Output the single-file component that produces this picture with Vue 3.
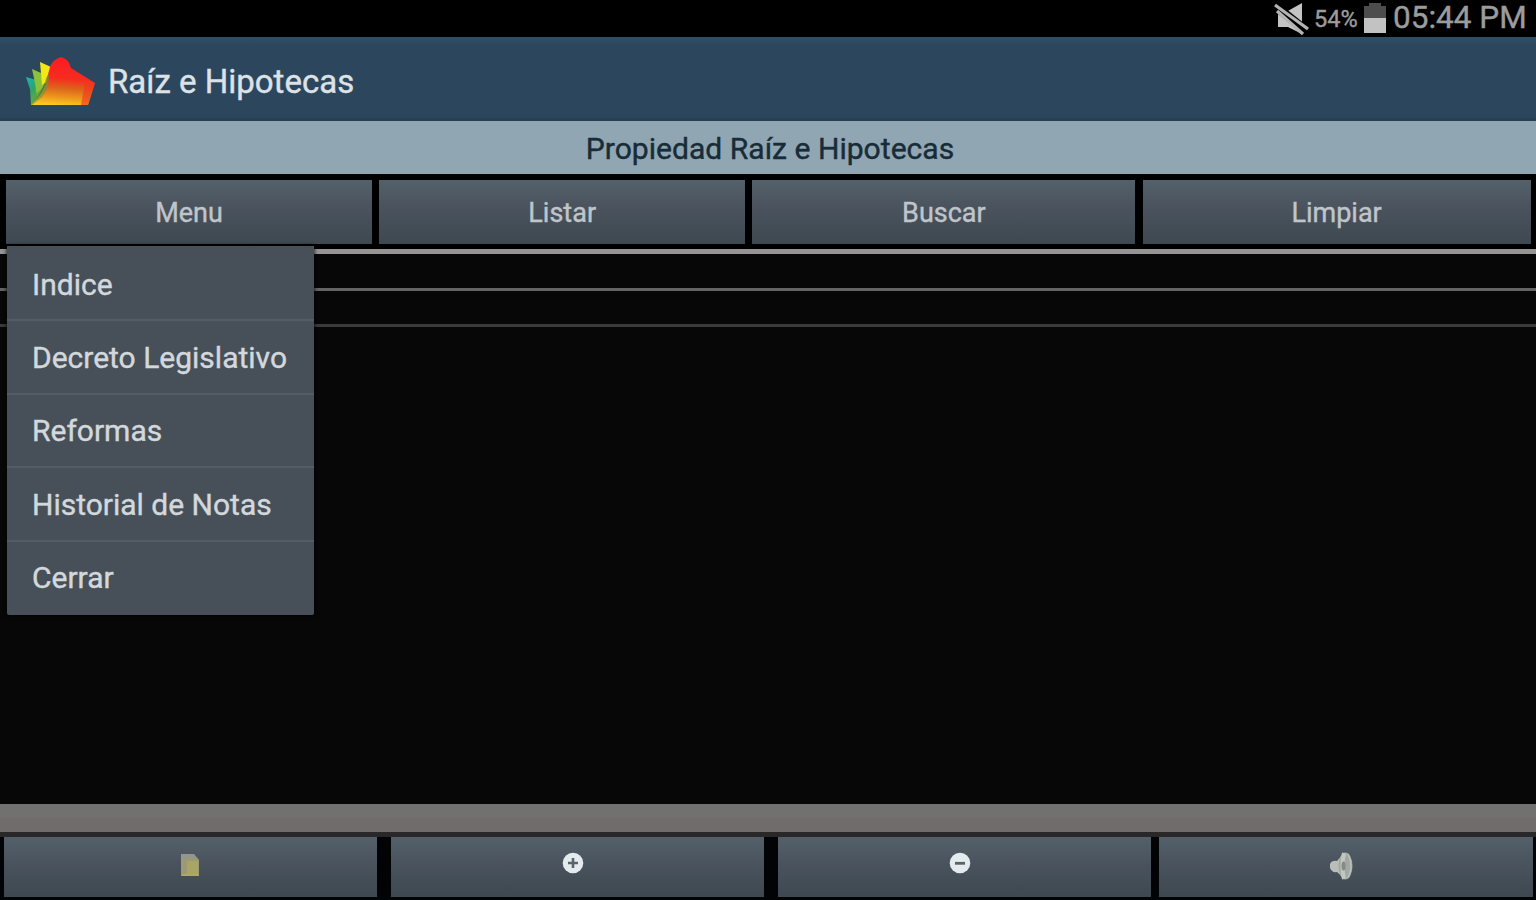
<script setup>
import { ref } from "vue";

const menuOpen = ref(true);

const tabs = [
  { id: "menu", label: "Menu" },
  { id: "listar", label: "Listar" },
  { id: "buscar", label: "Buscar" },
  { id: "limpiar", label: "Limpiar" }
];

const menuItems = [
  "Indice",
  "Decreto Legislativo",
  "Reformas",
  "Historial de Notas",
  "Cerrar"
];

function onTab(id) {
  menuOpen.value = id === "menu" ? !menuOpen.value : false;
}
</script>

<template>
  <div class="screen">
    <div class="status">
      <svg class="status__mute" width="36" height="34" viewBox="0 0 36 34">
        <path d="M4 10h8L28 1v31L14 25H4z" fill="#c4c4c4" />
        <path d="M0 3L35 31" stroke="#000" stroke-width="9" />
        <path d="M1 3L34 27" stroke="#b4b4b4" stroke-width="3.2" />
        <path d="M3 9L29 32" stroke="#b4b4b4" stroke-width="3.2" />
      </svg>
      <span class="status__percent">54%</span>
      <svg class="status__battery" width="24" height="32" viewBox="0 0 24 32">
        <path d="M1 4h5V1h12v3h5v12H1z" fill="#4d4d4d" />
        <path d="M1 16h22v15H1z" fill="#c2c2c2" />
      </svg>
      <span class="status__time">05:44 PM</span>
    </div>

    <header class="appbar">
      <svg class="appbar__logo" width="72" height="52" viewBox="0 0 72 52">
        <defs>
          <linearGradient id="folder" x1="0.55" y1="0" x2="0.45" y2="1">
            <stop offset="0" stop-color="#ff1a22" />
            <stop offset="0.45" stop-color="#f62c20" />
            <stop offset="0.65" stop-color="#dc641c" />
            <stop offset="0.84" stop-color="#ee961c" />
            <stop offset="1" stop-color="#f8ca22" />
          </linearGradient>
          <linearGradient id="leaf" x1="0" y1="0" x2="0.6" y2="1">
            <stop offset="0" stop-color="#16b5b8" />
            <stop offset="0.5" stop-color="#2fa468" />
            <stop offset="1" stop-color="#7cb03c" />
          </linearGradient>
        </defs>
        <path d="M1 21l7 2 5 2 5 6-10 18H6L5 33z" fill="url(#leaf)" />
        <path d="M7 13l9 4 3 12-7 12-2-14z" fill="#8cc23a" />
        <path d="M15 6l11 5-4 15-5 3z" fill="#f3e812" />
        <path d="M25 11Q27 4 36 1Q44 3 46 12L70 27L63 49H6Q20 36 22 22z" fill="url(#folder)" />
        <path d="M24 17Q25 32 17 41L7 49H6L10 38Q19 33 21 22z" fill="#5c9c38" opacity="0.6" />
        <path d="M60 27l10 0-7 22h-7z" fill="#f5321f" opacity="0.6" />
      </svg>
      <h1 class="appbar__title">Raíz e Hipotecas</h1>
    </header>

    <div class="subtitle">
      <span>Propiedad Raíz e Hipotecas</span>
    </div>

    <nav class="tabs">
      <button
        v-for="tab in tabs"
        :key="tab.id"
        type="button"
        class="btn"
        @click="onTab(tab.id)"
      >
        <span class="btn__label">{{ tab.label }}</span>
      </button>
      <ul v-if="menuOpen" class="dropdown">
        <li v-for="item in menuItems" :key="item" class="dropdown__item">
          <span>{{ item }}</span>
        </li>
      </ul>
    </nav>

    <main class="content">
      <div class="content__row"></div>
      <div class="content__row"></div>
    </main>

    <div class="band"></div>

    <footer class="tools">
      <button type="button" class="btn" aria-label="Nota">
        <svg class="tools__note" width="20" height="24" viewBox="0 0 20 24">
          <path d="M1 1h13l5 6v16H1z" fill="#9b9a72" />
          <path d="M7 8h11v13H7z" fill="#aaa564" />
          <path d="M1 1h13l2 5H3z" fill="#92968c" />
          <path d="M2 22h17" stroke="#b5ad68" stroke-width="1.5" />
        </svg>
      </button>
      <button type="button" class="btn" aria-label="Aumentar">
        <svg class="tools__zoom" width="24" height="24" viewBox="0 0 24 24">
          <circle cx="12" cy="12" r="10.3" fill="#e3ebef" />
          <path d="M12 7v10M7 12h10" stroke="#58636a" stroke-width="2.6" />
        </svg>
      </button>
      <button type="button" class="btn" aria-label="Reducir">
        <svg class="tools__zoom" width="24" height="24" viewBox="0 0 24 24">
          <circle cx="12" cy="12" r="10.3" fill="#e3ebef" />
          <path d="M7 12.3h10" stroke="#58636a" stroke-width="2.8" />
        </svg>
      </button>
      <button type="button" class="btn" aria-label="Sonido">
        <svg class="tools__sound" width="26" height="30" viewBox="0 0 26 30">
          <path d="M1 13q2-4 7-3 3-3 6-8h3v26h-3q-3-5-6-7-5 1-7-4z" fill="#b9beb9" />
          <ellipse cx="16.5" cy="15" rx="7" ry="13.5" fill="#a2a8a2" />
          <path d="M15 2q-3 13 0 26" fill="none" stroke="#c2c7c1" stroke-width="4" />
          <path d="M19 3q6 12 0 24" fill="none" stroke="#bcc1ba" stroke-width="1.5" />
          <ellipse cx="14.500" cy="15" rx="2" ry="4.500" fill="#858a87" />
        </svg>
      </button>
    </footer>
  </div>
</template>

<style>
body {
  margin: 0;
  background: #000;
}
</style>

<style scoped>
.screen {
  width: 1536px;
  height: 900px;
  display: flex;
  flex-direction: column;
  overflow: hidden;
  background: #000;
  font-family: Roboto, "Liberation Sans", sans-serif;
  -webkit-text-stroke: 0.4px currentColor;
}

.status {
  height: 37px;
  display: flex;
  align-items: center;
  justify-content: flex-end;
  box-sizing: border-box;
  padding-right: 9px;
  color: #9c9c9c;
  white-space: nowrap;
}

.status__percent {
  width: 45px;
  margin: 1px 4px 0 4px;
  font-size: 23.5px;
}

.status__battery {
  margin-bottom: 2px;
}

.status__time {
  width: 134px;
  margin: 0 0 2px 6px;
  font-size: 31.5px;
}

.appbar {
  height: 84px;
  display: flex;
  align-items: center;
  gap: 11px;
  box-sizing: border-box;
  padding: 5px 25px 0;
  background: linear-gradient(#304e66, #2c475d 10%, #2c475d 94%, #233c51);
}

.appbar__title {
  margin: 0;
  color: #dde2e6;
  font-size: 33px;
  font-weight: 400;
  line-height: 40px;
}

.subtitle {
  height: 53px;
  display: flex;
  align-items: center;
  justify-content: center;
  box-sizing: border-box;
  padding: 1px 0 0 4px;
  background: #90a7b3;
  color: #182c38;
  font-size: 30.1px;
}

.tabs {
  position: relative;
  height: 75px;
  display: grid;
  grid-template-columns: 366px 366px 383px 388px;
  column-gap: 7.2px;
  box-sizing: border-box;
  padding: 6px 0 5px 6px;
}

.btn {
  display: flex;
  align-items: center;
  justify-content: center;
  margin: 0;
  padding: 0;
  border: 0;
  background: linear-gradient(#53606a, #4b545e 40%, #3e4851);
  color: #bfc5cb;
  font-family: inherit;
  font-size: 27px;
}

.btn__label {
  padding-top: 2px;
}

.dropdown {
  position: absolute;
  top: 72px;
  left: 7px;
  z-index: 2;
  width: 307px;
  height: 369px;
  display: grid;
  grid-template-rows: repeat(5, 1fr);
  box-sizing: border-box;
  margin: 0;
  padding: 2px 0 0;
  list-style: none;
  background: #475059;
  border-radius: 0 0 2px 2px;
  box-shadow: 0 0 4px #000;
}

.dropdown__item {
  display: flex;
  align-items: center;
  padding: 1px 0 0 25px;
  border-bottom: 2px solid #525d67;
  color: #d3d8dc;
  font-size: 30px;
  white-space: nowrap;
}

.dropdown__item:last-child {
  border-bottom-color: transparent;
}

.content {
  flex: 1;
  border-top: 5px solid #969494;
  background: #070707;
}

.content__row {
  height: 34px;
  border-bottom: 3px solid #646464;
}

.content__row + .content__row {
  height: 33px;
  border-bottom-color: #3a3a3a;
}

.band {
  height: 28px;
  background: linear-gradient(#71716f 45%, #716c6c 55%);
}

.tools {
  height: 68px;
  display: flex;
  box-sizing: border-box;
  padding: 5px 3px 3px 4px;
  background: linear-gradient(#292728 5px, #020304 5px);
}

.tools .btn {
  width: 373px;
}

.tools .btn + .btn {
  margin-left: 14px;
}

.tools .btn:last-child {
  width: 374px;
  margin-left: 8px;
}

.tools__zoom {
  margin-bottom: 9px;
  margin-right: 9px;
}

.tools__note {
  margin-bottom: 4px;
  margin-right: 1px;
}

.tools__sound {
  margin-right: 9px;
  margin-bottom: 2px;
}
</style>
